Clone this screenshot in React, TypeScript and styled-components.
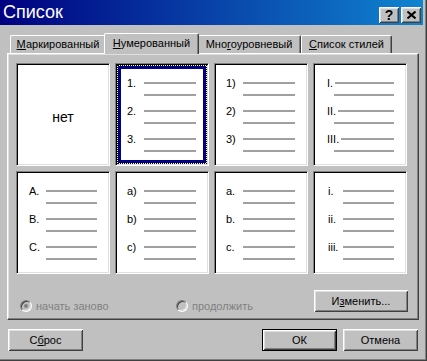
import React from 'react'
import styled, { createGlobalStyle, css } from 'styled-components'

const GlobalStyle = createGlobalStyle`
  html, body {
    margin: 0;
    padding: 0;
    background: #c0c0c0;
  }
  body {
    font-family: 'Liberation Sans', Arial, sans-serif;
    font-size: 11px;
    color: #000;
  }
`

const bevel = css`
  box-shadow: inset 1px 1px #fff, inset -1px -1px #404040, inset 2px 2px #dfdfdf,
    inset -2px -2px #808080;
`

const Window = styled.div`
  width: 427px;
  height: 361px;
  box-sizing: border-box;
  padding: 0 4px 4px 0;
  background: #c0c0c0;
  box-shadow: inset -1px -1px #404040, inset -2px -2px #808080;
  display: flex;
  flex-direction: column;
`

const TitleBar = styled.div`
  height: 25px;
  display: flex;
  align-items: center;
  padding: 0 2px 0 3px;
  background: linear-gradient(to right, #000080, #1084d0);
`

const Title = styled.div`
  flex: 1;
  color: #fff;
  font-size: 18px;
  line-height: 25px;
`

const CaptionButtons = styled.div`
  display: flex;
  gap: 2px;
  padding-top: 4px;
`

const CaptionButton = styled.div`
  width: 20px;
  height: 16px;
  box-sizing: border-box;
  background: #c0c0c0;
  ${bevel};
  display: flex;
  align-items: center;
  justify-content: center;
  font-size: 14px;
  font-weight: bold;
  line-height: 16px;
`

const Body = styled.div`
  flex: 1;
  display: flex;
  flex-direction: column;
  padding: 8px 4px 0 7px;
`

const TabStrip = styled.div`
  height: 20px;
  display: flex;
  align-items: flex-end;
  padding-left: 3px;
`

const Tab = styled.div<{ $active?: boolean; $w: number }>`
  position: relative;
  box-sizing: border-box;
  width: ${({ $w }) => $w}px;
  height: ${({ $active }) => ($active ? 21 : 18)}px;
  margin: ${({ $active }) => ($active ? '0 -2px -1px' : '0')};
  z-index: ${({ $active }) => ($active ? 1 : 0)};
  background: #c0c0c0;
  border-top: 1px solid #fff;
  border-left: 1px solid #fff;
  border-right: 1px solid #404040;
  border-radius: 2px 2px 0 0;
  box-shadow: inset -1px 0 #808080;
  text-align: center;
  line-height: ${({ $active }) => ($active ? 19 : 17)}px;
  white-space: nowrap;
`

const Panel = styled.div`
  height: 267px;
  box-sizing: border-box;
  display: flex;
  flex-direction: column;
  padding: 9px 0 0 8px;
  border: 1px solid;
  border-color: #fff #404040 #404040 #fff;
  box-shadow: inset -1px -1px #808080, inset 1px 1px #dfdfdf;
`

const Grid = styled.div`
  display: grid;
  grid-template-columns: repeat(4, 94px);
  grid-auto-rows: 103px;
  gap: 5px;
`

const Cell = styled.div`
  box-sizing: border-box;
  display: flex;
  padding: 1px;
  background: #fff;
  border: 1px solid;
  border-color: #808080 #fff #fff #808080;
  box-shadow: inset 1px 1px #000, inset -1px -1px #dfdfdf;
`

const Inner = styled.div<{ $selected?: boolean; $pad: number }>`
  flex: 1;
  margin: 1px;
  padding: 8px 7px 0 ${({ $pad }) => $pad - 6}px;
  border: 3px solid ${({ $selected }) => ($selected ? '#000080' : 'transparent')};
  outline: ${({ $selected }) => ($selected ? '1px dotted #000' : 'none')};
  display: flex;
  flex-direction: column;
  gap: 4px;
`

const NoneInner = styled.div`
  flex: 1;
  display: flex;
  align-items: center;
  justify-content: center;
  padding-top: 5px;
  font-size: 14px;
`

const Group = styled.div`
  display: flex;
  flex-direction: column;
`

const Row = styled.div<{ $indent?: number }>`
  height: 12px;
  display: flex;
  align-items: center;
  margin-left: ${({ $indent }) => $indent ?? 0}px;
`

const Label = styled.span<{ $slot?: number }>`
  flex: none;
  width: ${({ $slot }) => ($slot ? `${$slot}px` : 'auto')};
  margin-right: ${({ $slot }) => ($slot ? 0 : 2)}px;
  font-size: 11px;
  line-height: 12px;
`

const Line = styled.div`
  flex: 1;
  height: 2px;
  background: #a0a0a0;
`

const Footer = styled.div`
  margin-top: 16px;
  display: flex;
  align-items: flex-end;
  padding: 0 10px 0 4px;
`

const RadioItem = styled.label<{ $w?: number }>`
  width: ${({ $w }) => ($w ? `${$w}px` : 'auto')};
  height: 12px;
  display: flex;
  align-items: center;
  gap: 4px;
  color: #808080;
  font-size: 11px;
`

const RadioCircle = styled.span<{ $checked?: boolean }>`
  width: 12px;
  height: 12px;
  box-sizing: border-box;
  border-radius: 50%;
  border: 1px solid;
  border-color: #808080 #fff #fff #808080;
  box-shadow: inset 1px 1px #404040, inset -1px -1px #dfdfdf;
  background: #c0c0c0;
  display: flex;
  align-items: center;
  justify-content: center;
  &::after {
    content: '';
    width: 4px;
    height: 4px;
    border-radius: 50%;
    background: ${({ $checked }) => ($checked ? '#808080' : 'transparent')};
  }
`

const Button = styled.div<{ $w?: number; $default?: boolean }>`
  width: ${({ $w }) => $w ?? 75}px;
  height: 22px;
  box-sizing: border-box;
  background: #c0c0c0;
  border: ${({ $default }) => ($default ? '1px solid #000' : 'none')};
  ${bevel};
  display: flex;
  align-items: center;
  justify-content: center;
  font-size: 11px;
`

const Spacer = styled.div`
  flex: 1;
`

const ButtonRow = styled.div`
  margin-top: 9px;
  display: flex;
  gap: 6px;
  padding: 0 1px;
`

type CellDef =
  | { none: true }
  | { labels: string[]; pad: number; slot?: number; indent?: number; selected?: boolean }

const cells: CellDef[] = [
  { none: true },
  { labels: ['1.', '2.', '3.'], pad: 12, slot: 17, selected: true },
  { labels: ['1)', '2)', '3)'], pad: 12, slot: 17 },
  { labels: ['I.', 'II.', 'III.'], pad: 14, indent: 7 },
  { labels: ['A.', 'B.', 'C.'], pad: 13, slot: 17 },
  { labels: ['a)', 'b)', 'c)'], pad: 12, slot: 17 },
  { labels: ['a.', 'b.', 'c.'], pad: 12, slot: 17 },
  { labels: ['i.', 'ii.', 'iii.'], pad: 15, slot: 15 },
]

const CloseIcon = () => (
  <svg width="9" height="8" viewBox="0 0 9 8">
    <path d="M0.5 0.5 L8.5 7.5 M8.5 0.5 L0.5 7.5" stroke="#000" strokeWidth="2" />
  </svg>
)

export default function App() {
  return (
    <>
      <GlobalStyle />
      <Window>
        <TitleBar>
          <Title>Список</Title>
          <CaptionButtons>
            <CaptionButton>?</CaptionButton>
            <CaptionButton>
              <CloseIcon />
            </CaptionButton>
          </CaptionButtons>
        </TitleBar>
        <Body>
          <TabStrip>
            <Tab $w={96}>
              <u>М</u>аркированный
            </Tab>
            <Tab $w={95} $active>
              <u>Н</u>умерованный
            </Tab>
            <Tab $w={104}>
              Мно<u>г</u>оуровневый
            </Tab>
            <Tab $w={91}>
              <u>С</u>писок стилей
            </Tab>
          </TabStrip>
          <Panel>
            <Grid>
              {cells.map((c, i) => (
                <Cell key={i}>
                  {'none' in c ? (
                    <NoneInner>нет</NoneInner>
                  ) : (
                    <Inner $pad={c.pad} $selected={c.selected}>
                      {c.labels.map((l) => (
                        <Group key={l}>
                          <Row>
                            <Label $slot={c.slot}>{l}</Label>
                            <Line />
                          </Row>
                          <Row $indent={c.slot ?? c.indent}>
                            <Line />
                          </Row>
                        </Group>
                      ))}
                    </Inner>
                  )}
                </Cell>
              ))}
            </Grid>
            <Footer>
              <RadioItem $w={156}>
                <RadioCircle $checked />
                начать заново
              </RadioItem>
              <RadioItem>
                <RadioCircle />
                продолжить
              </RadioItem>
              <Spacer />
              <Button $w={94}>
                И<u>з</u>менить...
              </Button>
            </Footer>
          </Panel>
          <ButtonRow>
            <Button>
              С<u>б</u>рос
            </Button>
            <Spacer />
            <Button $default>ОК</Button>
            <Button>Отмена</Button>
          </ButtonRow>
        </Body>
      </Window>
    </>
  )
}
